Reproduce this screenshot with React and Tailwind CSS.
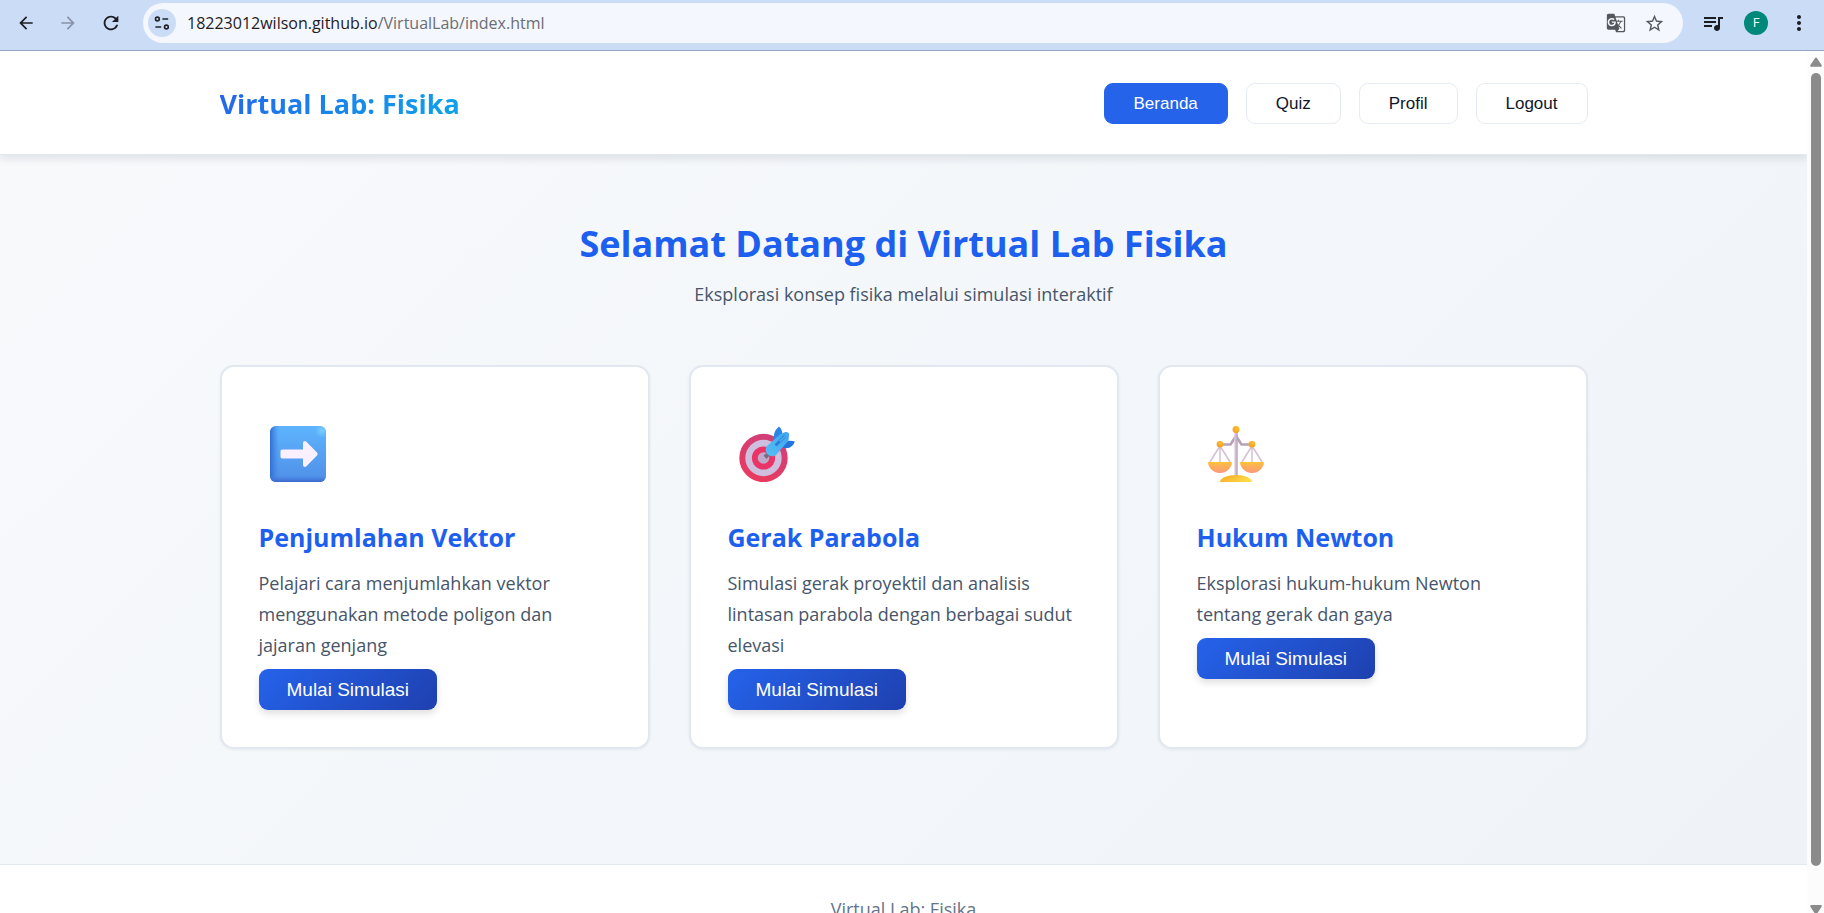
import React from "react";
import { MdArrowBack, MdArrowForward, MdRefresh, MdGTranslate, MdStarBorder, MdQueueMusic, MdMoreVert } from "react-icons/md";

const UI_FONT = "font-['Open_Sans',sans-serif]";
const BUTTON_FONT = "font-['Liberation_Sans',Arial,sans-serif]";

function SiteSettingsIcon() {
  return (
    <svg viewBox="0 0 16 14" className="h-[14px] w-4" fill="none" stroke="#1f2328" strokeWidth="1.6" aria-hidden="true">
      <circle cx="3.4" cy="3" r="1.9" />
      <path d="M8.4 3H14.2M1.4 11H7.2" />
      <circle cx="12.4" cy="11" r="1.9" />
    </svg>
  );
}

function ArrowIcon() {
  return (
    <svg viewBox="0 0 56 56" className="size-14" aria-hidden="true">
      <defs>
        <linearGradient id="tileFill" x1="0" y1="0" x2="0" y2="1">
          <stop offset="0" stopColor="#5db4fd" />
          <stop offset="1" stopColor="#4f8fe8" />
        </linearGradient>
        <linearGradient id="tileLeft" x1="0" y1="0" x2="1" y2="0">
          <stop offset="0" stopColor="#2f6fd2" />
          <stop offset="0.16" stopColor="#3f7fe0" stopOpacity="0" />
        </linearGradient>
        <linearGradient id="tileBottom" x1="0" y1="1" x2="0" y2="0">
          <stop offset="0" stopColor="#3a66cf" />
          <stop offset="0.12" stopColor="#4a80e0" stopOpacity="0" />
        </linearGradient>
        <radialGradient id="tileShine" cx="0.93" cy="0.08" r="0.14">
          <stop offset="0" stopColor="#7dd3ff" />
          <stop offset="1" stopColor="#6cc0ff" stopOpacity="0" />
        </radialGradient>
      </defs>
      <rect width="56" height="56" rx="6" fill="url(#tileFill)" />
      <rect width="56" height="56" rx="6" fill="url(#tileLeft)" />
      <rect width="56" height="56" rx="6" fill="url(#tileBottom)" />
      <rect width="56" height="56" rx="6" fill="url(#tileShine)" />
      <path
        d="M12.5 23.5H33V17.2C33 15.2 35 14.4 36.4 15.8L47 26.6C47.9 27.5 47.9 28.5 47 29.4L36.4 40.2C35 41.6 33 40.8 33 38.8V32.5H12.5C11 32.5 10.5 31.8 10.5 30.5V25.5C10.5 24.2 11 23.5 12.5 23.5Z"
        fill="#fbf0ff"
      />
    </svg>
  );
}

function TargetIcon() {
  return (
    <svg viewBox="0 0 56 56" className="size-14" aria-hidden="true">
      <defs>
        <linearGradient id="ringRed" x1="0.7" y1="0" x2="0.3" y2="1">
          <stop offset="0" stopColor="#cf4079" />
          <stop offset="1" stopColor="#ea3a5e" />
        </linearGradient>
        <linearGradient id="dartBody" x1="1" y1="0" x2="0" y2="1">
          <stop offset="0" stopColor="#3fa2ee" />
          <stop offset="1" stopColor="#55c0f3" />
        </linearGradient>
      </defs>
      <circle cx="24.5" cy="32" r="24.2" fill="url(#ringRed)" />
      <circle cx="24.5" cy="32" r="18.2" fill="#cdbfdd" />
      <circle cx="24.5" cy="32" r="11.6" fill="#ea3468" />
      <circle cx="24.5" cy="32" r="5.8" fill="#bfabc9" />
      <path d="M24.5 29.5L29 26L31.5 28.5L27.5 33Z" fill="#7b6a83" />
      <path d="M40 .5C35.5 4 34 9 35 16L42 12.5C44.5 8.5 43.5 4 40 .5Z" fill="#2a85e4" />
      <path d="M55.8 15.5C52 14 48.5 14.5 45.5 16.5L43.5 21.5C50 23.5 54 20.5 55.8 15.5Z" fill="#2374dc" />
      <path d="M46.5 6C48.5 5.5 50.5 7.5 50 9.5L49.5 14.5L37.5 28.5C34.5 31.5 30 30.5 28 27.5C26 24.5 26.5 21.5 28.5 19.5L41.5 8Z" fill="url(#dartBody)" />
      <path d="M45.5 10.5L37.5 18.5" stroke="#2b7fd8" strokeWidth="3" strokeLinecap="round" />
      <path d="M49 7.5L41 15" stroke="#4bb0f2" strokeWidth="1.5" strokeLinecap="round" />
    </svg>
  );
}

function ScaleIcon() {
  return (
    <svg viewBox="0 0 56 56" className="size-14" aria-hidden="true">
      <defs>
        <linearGradient id="pan" x1="0" y1="0" x2="0" y2="1">
          <stop offset="0" stopColor="#ffc52e" />
          <stop offset="0.3" stopColor="#fdb257" />
          <stop offset="0.7" stopColor="#fca667" />
          <stop offset="1" stopColor="#fb9384" />
        </linearGradient>
        <linearGradient id="base" x1="0" y1="0" x2="1" y2="0.4">
          <stop offset="0" stopColor="#f6a723" />
          <stop offset="1" stopColor="#ffda45" />
        </linearGradient>
        <radialGradient id="ball" cx="0.6" cy="0.35" r="0.7">
          <stop offset="0" stopColor="#ffc22e" />
          <stop offset="1" stopColor="#f79a1e" />
        </radialGradient>
        <linearGradient id="post" x1="0" y1="0" x2="1" y2="0">
          <stop offset="0" stopColor="#e2d3e4" />
          <stop offset="1" stopColor="#b39cb4" />
        </linearGradient>
      </defs>
      <g fill="none" stroke="#d3c1d3" strokeWidth="1.5">
        <path d="M12 20L1.8 36M12 20V36M12 20L22.2 36" />
        <path d="M44 20L33.8 36M44 20V36M44 20L54.2 36" />
      </g>
      <path d="M12 18.5H22.5L28 10L33.5 18.5H44" fill="none" stroke="#b7a2b9" strokeWidth="2.6" strokeLinejoin="round" />
      <rect x="26.3" y="5" width="3.4" height="45" fill="url(#post)" />
      <path d="M0 36H24C24 42 18.5 47 12 47S0 42 0 36Z" fill="url(#pan)" />
      <path d="M32 36H56C56 42 50.5 47 44 47S32 42 32 36Z" fill="url(#pan)" />
      <path d="M12 56C12 52 19.5 49 28 49S44 52 44 56Z" fill="url(#base)" />
      <circle cx="28" cy="3.5" r="3.4" fill="url(#ball)" />
      <circle cx="12" cy="18.3" r="3.3" fill="url(#ball)" />
      <circle cx="44" cy="18.3" r="3.3" fill="url(#ball)" />
    </svg>
  );
}

const MODULES = [
  {
    title: "Penjumlahan Vektor",
    text: "Pelajari cara menjumlahkan vektor menggunakan metode poligon dan jajaran genjang",
    Icon: ArrowIcon,
  },
  {
    title: "Gerak Parabola",
    text: "Simulasi gerak proyektil dan analisis lintasan parabola dengan berbagai sudut elevasi",
    Icon: TargetIcon,
  },
  {
    title: "Hukum Newton",
    text: "Eksplorasi hukum-hukum Newton tentang gerak dan gaya",
    Icon: ScaleIcon,
  },
];

function BrowserBar() {
  return (
    <div className="flex h-[51px] shrink-0 items-start border-b border-[#93a5c3] bg-[#cbdcf7] pt-[3px]">
      <div className="flex h-10 w-full items-center pr-[13px] pl-4">
        <div className="flex w-[127px] shrink-0 items-center gap-[22px] text-[#1b1d21]">
          <button type="button" aria-label="Back"><MdArrowBack className="size-5" /></button>
          <button type="button" aria-label="Forward" className="text-[#8793a8]"><MdArrowForward className="size-5" /></button>
          <button type="button" aria-label="Reload"><MdRefresh className="size-[22px]" /></button>
        </div>
        <div className="flex h-10 flex-1 items-center rounded-full bg-[#f4f7fd] pr-[18px] pl-[5px]">
          <button type="button" aria-label="Site information" className="flex size-7 items-center justify-center rounded-full bg-[#cbdcf7]">
            <SiteSettingsIcon />
          </button>
          <a href="#" className="ml-[11px] text-[16px] leading-6 whitespace-nowrap text-[#1f2023]">
            18223012wilson.github.io<span className="text-[#6b6e73]">/VirtualLab/index.html</span>
          </a>
          <div className="ml-auto flex items-center gap-[18px] text-[#54575b]">
            <button type="button" aria-label="Translate"><MdGTranslate className="size-5" /></button>
            <button type="button" aria-label="Bookmark"><MdStarBorder className="size-[21px]" /></button>
          </div>
        </div>
        <div className="flex shrink-0 items-center gap-[19px] pl-[18px] text-[#1b1d21]">
          <button type="button" aria-label="Media"><MdQueueMusic className="size-6" /></button>
          <button type="button" aria-label="Profile" className="flex size-6 items-center justify-center rounded-full bg-[#00897b] text-[13px] text-white">F</button>
          <button type="button" aria-label="Menu"><MdMoreVert className="size-6" /></button>
        </div>
      </div>
    </div>
  );
}

function NavButton({ label, active }) {
  return (
    <button
      type="button"
      className={
        "h-[41px] rounded-[9px] border px-[29px] text-[17px] leading-5 " + BUTTON_FONT +
        (active ? " border-[#2563eb] bg-[#2563eb] text-white" : " border-[#e6ebf4] bg-white text-[#0f172a]")
      }
    >
      {label}
    </button>
  );
}

function ModuleCard({ title, text, Icon }) {
  return (
    <article className="rounded-[14px] border-2 border-[#e2e8f0] bg-white px-[37px] py-[37px] shadow-[0_1px_3px_rgba(15,23,42,0.06)]">
      <div className="pt-[22px] pb-[38px] pl-[11px]">
        <Icon />
      </div>
      <h2 className="text-[25px] leading-[34px] font-bold text-[#1d5fee]">{title}</h2>
      <p className="mt-[14px] text-[18px] leading-[31px] text-[#475569]">{text}</p>
      <button
        type="button"
        className={"mt-2 block h-[41px] rounded-[9px] bg-linear-135 from-[#2563eb] to-[#1e40af] px-7 text-[19px] leading-6 text-white shadow-[0_4px_7px_rgba(0,0,0,0.12)] " + BUTTON_FONT}
      >
        Mulai Simulasi
      </button>
    </article>
  );
}

function Scrollbar() {
  return (
    <div className="flex w-[17px] shrink-0 flex-col items-center justify-between bg-[#fcfcfc] pt-[6px]" aria-hidden="true">
      <svg viewBox="0 0 12 10" className="h-[10px] w-3 shrink-0"><path d="M5 1.2Q6-.4 7 1.2L11.6 8Q12.2 9.8 10.8 9.8H1.2Q-.2 9.8.4 8Z" fill="#8b8b8b" /></svg>
      <div className="mt-[6px] mb-[39px] w-[10px] flex-1 rounded-full bg-[#8b8b8b]" />
      <svg viewBox="0 0 12 8" className="h-2 w-3 shrink-0"><path d="M1.2 0H10.8Q12.2.2 11.6 1.8L7.5 8H4.5L.4 1.8Q-.2.2 1.2 0Z" fill="#8b8b8b" /></svg>
    </div>
  );
}

export default function App() {
  return (
    <div className={"flex h-screen flex-col overflow-hidden " + UI_FONT}>
      <BrowserBar />
      <div className="flex min-h-0 flex-1">
        <div className="min-w-0 flex-1 overflow-hidden bg-linear-135 from-[#f8fafc] to-[#eff3f8]">
          <header className="relative border-b border-[#e2e8f0] bg-white pt-8 pb-[30px] shadow-[0_4px_8px_rgba(15,23,42,0.1)]">
            <div className="mx-auto flex max-w-[1368px] items-center justify-between">
              <a href="#" className="bg-linear-135 from-[#2563eb] to-[#0ea5e9] bg-clip-text text-[27px] leading-10 font-bold text-transparent">
                Virtual Lab: Fisika
              </a>
              <nav className="flex gap-[18px]">
                <NavButton label="Beranda" active />
                <NavButton label="Quiz" />
                <NavButton label="Profil" />
                <NavButton label="Logout" />
              </nav>
            </div>
          </header>
          <main className="mx-auto max-w-[1368px] pt-[62px] pb-[115px]">
            <div className="text-center">
              <h1 className="text-[36px] leading-[54px] font-bold text-[#1d5fee]">Selamat Datang di Virtual Lab Fisika</h1>
              <p className="mt-2 text-[18px] leading-[30px] text-[#475569]">Eksplorasi konsep fisika melalui simulasi interaktif</p>
            </div>
            <div className="mt-14 grid grid-cols-3 gap-[39px]">
              {MODULES.map((m) => (
                <ModuleCard key={m.title} {...m} />
              ))}
            </div>
          </main>
          <footer className="border-t border-[#e2e8f0] bg-white py-[29px] text-center text-[18px] leading-[30px] text-[#64748b]">
            <p>Virtual Lab: Fisika</p>
          </footer>
        </div>
        <Scrollbar />
      </div>
    </div>
  );
}
